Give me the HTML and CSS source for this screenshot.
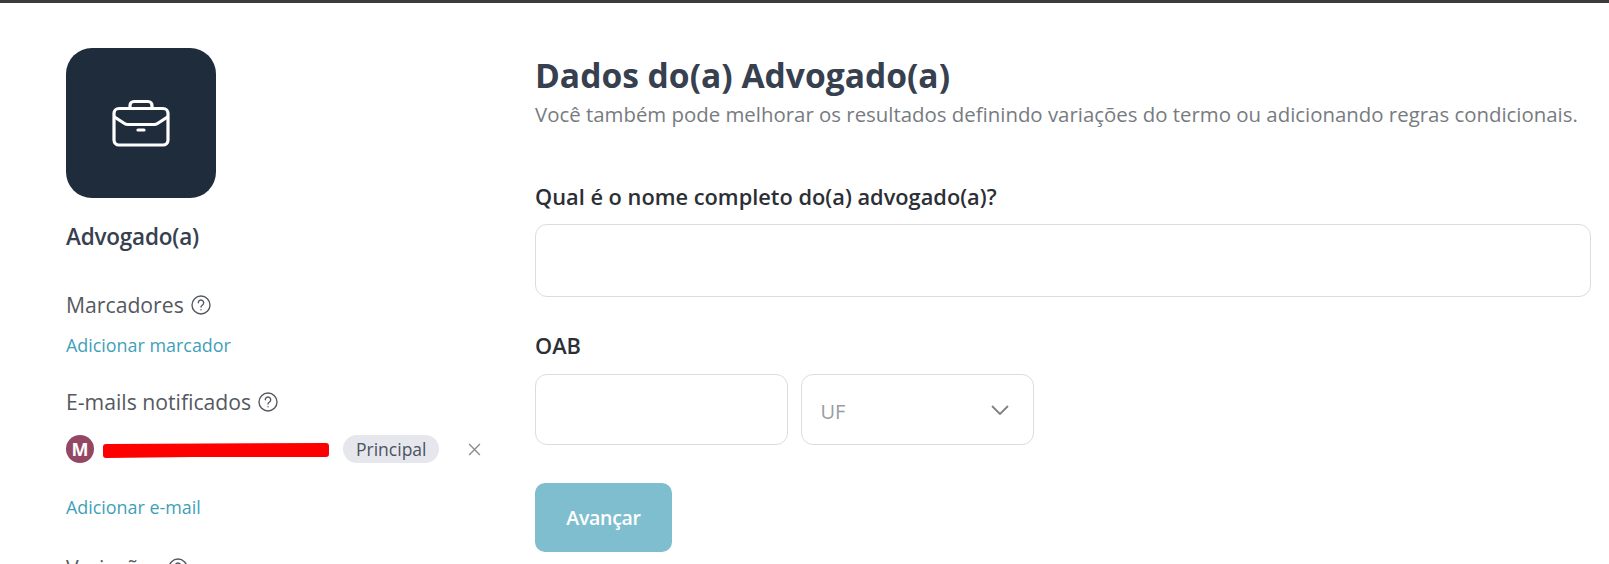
FILE: index.html
```html
<!DOCTYPE html>
<html lang="pt-BR">
<head>
    <meta charset="UTF-8">
    <meta name="viewport" content="width=device-width, initial-scale=1.0">
    <title>Dados do(a) Advogado(a)</title>
    <link rel="stylesheet" href="styles.css">
</head>
<body>
    <div class="top-bar"></div>
    <div class="page">
        <aside class="sidebar">
            <div class="type-tile">
                <svg class="type-icon" viewBox="0 0 58 48" fill="none" stroke="#fff" stroke-width="3.200" stroke-linecap="round" stroke-linejoin="round">
                    <rect x="2" y="9.500" width="54" height="36.500" rx="5"/>
                    <path d="M18 9.500V6.500a4 4 0 0 1 4-4h14a4 4 0 0 1 4 4v3"/>
                    <path d="M2.500 18l10 6.500a6 6 0 0 0 3.500 1h26a6 6 0 0 0 3.500-1l10-6.500"/>
                    <path d="M26 31h6"/>
                </svg>
            </div>
            <div class="type-name">Advogado(a)</div>

            <div class="side-title side-title-first">Marcadores
                <svg class="help-icon" viewBox="0 0 20 20" fill="none" stroke="#55595f" stroke-width="1.400" stroke-linecap="round">
                    <circle cx="10" cy="10" r="9"/>
                    <path d="M7.300 7.800a2.700 2.700 0 1 1 4.200 2.200c-.9.600-1.500 1-1.500 2"/>
                    <path d="M10 14.600v.1"/>
                </svg>
            </div>
            <a class="side-link" href="#">Adicionar marcador</a>

            <div class="side-title side-title-emails">E-mails notificados
                <svg class="help-icon" viewBox="0 0 20 20" fill="none" stroke="#55595f" stroke-width="1.400" stroke-linecap="round">
                    <circle cx="10" cy="10" r="9"/>
                    <path d="M7.300 7.800a2.700 2.700 0 1 1 4.200 2.200c-.9.600-1.500 1-1.500 2"/>
                    <path d="M10 14.600v.1"/>
                </svg>
            </div>
            <div class="email-row">
                <span class="avatar">M</span>
                <!-- email scribbled out in the original -->
                <svg class="email-hidden" viewBox="0 0 226 15" fill="#fe0000">
                    <path d="M3 1L223 0q3 0 3 3v8q0 3-3 3L90 14 3 15q-3 0-3-3V4q0-3 3-3z"/>
                </svg>
                <span class="badge">Principal</span>
                <svg class="remove-icon" viewBox="0 0 12 12" fill="none" stroke="#8a8d92" stroke-width="1.300">
                    <path d="M1 1l10 10M11 1L1 11"/>
                </svg>
            </div>
            <a class="side-link side-link-email" href="#">Adicionar e-mail</a>

            <div class="side-title side-title-variations">Variações
                <svg class="help-icon" viewBox="0 0 20 20" fill="none" stroke="#55595f" stroke-width="1.400" stroke-linecap="round">
                    <circle cx="10" cy="10" r="9"/>
                    <path d="M7.300 7.800a2.700 2.700 0 1 1 4.200 2.200c-.9.600-1.500 1-1.500 2"/>
                    <path d="M10 14.600v.1"/>
                </svg>
            </div>
        </aside>

        <main class="content">
            <h1>Dados do(a) Advogado(a)</h1>
            <p class="subtitle">Você também pode melhorar os resultados definindo variações do termo ou adicionando regras condicionais.</p>

            <form>
                <label class="field-label" for="nome">Qual é o nome completo do(a) advogado(a)?</label>
                <input class="text-input" type="text" id="nome">

                <label class="field-label field-label-oab" for="oab">OAB</label>
                <div class="oab-row">
                    <input class="text-input oab-input" type="text" id="oab">
                    <div class="uf-select">
                        <span>UF</span>
                        <svg class="chevron" viewBox="0 0 18 10" fill="none" stroke="#808080" stroke-width="1.800">
                            <path d="M1 1l8 8 8-8"/>
                        </svg>
                    </div>
                </div>

                <button class="next-button" type="button">Avançar</button>
            </form>
        </main>
    </div>
</body>
</html>
```

FILE: styles.css
```css
html, body {
    height: 564px;
    overflow: hidden;
}
body {
    font-family: "Open Sans", "Noto Sans", sans-serif;
    background-color: #fff;
    margin: 0;
    padding: 0;
    color: #333;
}
.top-bar {
    height: 3px;
    background-color: #3c3c3c;
}
.page {
    display: flex;
    padding: 45px 18px 0 66px;
}
.sidebar {
    width: 469px;
    flex-shrink: 0;
}
.type-tile {
    width: 150px;
    height: 150px;
    border-radius: 26px;
    background-color: #1e2c3b;
    display: flex;
    align-items: center;
    justify-content: center;
}
.type-icon {
    width: 58px;
    height: 48px;
}
.type-name {
    margin-top: 25px;
    font-size: 22.500px;
    line-height: 27px;
    font-weight: 600;
    letter-spacing: -0.200px;
    color: #36404f;
}
.side-title {
    display: flex;
    align-items: center;
    gap: 7px;
    font-size: 21.200px;
    line-height: 27px;
    color: #55595f;
}
.side-title-first {
    margin-top: 41px;
}
.side-title-emails {
    margin-top: 31px;
}
.side-title-variations {
    margin-top: 35px;
}
.help-icon {
    width: 20px;
    height: 20px;
}
.side-link {
    display: block;
    margin-top: 16px;
    font-size: 17.900px;
    line-height: 23px;
    color: #3f9fb8;
    text-decoration: none;
}
.side-link-email {
    margin-top: 33px;
}
.email-row {
    display: flex;
    align-items: center;
    margin-top: 20px;
    height: 28px;
}
.avatar {
    width: 28px;
    height: 28px;
    border-radius: 50%;
    background-color: #934763;
    color: #fff;
    font-size: 18px;
    font-weight: 700;
    display: flex;
    align-items: center;
    justify-content: center;
}
.email-hidden {
    width: 226px;
    height: 15px;
    margin: 3px 14px 0 9px;
}
.badge {
    height: 28px;
    line-height: 28px;
    padding: 0 13px;
    border-radius: 14px;
    background-color: #e5e7ec;
    color: #4b5262;
    font-size: 17.500px;
}
.remove-icon {
    width: 13px;
    height: 13px;
    margin-left: 29px;
}
.content {
    flex: 1;
    min-width: 0;
}
h1 {
    margin: 6px 0 0;
    font-size: 33.600px;
    line-height: 42px;
    font-weight: 700;
    color: #36404f;
}
.subtitle {
    margin: 5px 0 0;
    font-size: 20.400px;
    line-height: 27px;
    color: #777b80;
    white-space: nowrap;
}
.field-label {
    display: block;
    margin-top: 55px;
    font-size: 21.800px;
    line-height: 27px;
    font-weight: 600;
    color: #2c2f36;
}
.field-label-oab {
    margin-top: 35px;
}
.text-input {
    display: block;
    width: 100%;
    height: 73px;
    margin-top: 14px;
    box-sizing: border-box;
    border: 1px solid #dcdcdc;
    border-radius: 12px;
    background-color: #fff;
}
.oab-row {
    display: flex;
    gap: 13px;
    margin-top: 15px;
}
.oab-input {
    width: 252.500px;
    height: 71px;
    margin-top: 0;
}
.uf-select {
    width: 233px;
    height: 71px;
    box-sizing: border-box;
    border: 1px solid #dcdcdc;
    border-radius: 12px;
    padding: 3px 24px 0 19px;
    display: flex;
    align-items: center;
    justify-content: space-between;
    font-size: 20px;
    color: #9a9ca3;
}
.chevron {
    width: 18px;
    height: 10px;
    margin-top: -3px;
}
.next-button {
    display: block;
    margin-top: 38px;
    width: 137px;
    height: 69px;
    border: none;
    border-radius: 10px;
    background-color: #7ebecf;
    color: #fff;
    font-family: inherit;
    font-size: 19.500px;
    font-weight: 600;
    letter-spacing: -0.300px;
}
```
